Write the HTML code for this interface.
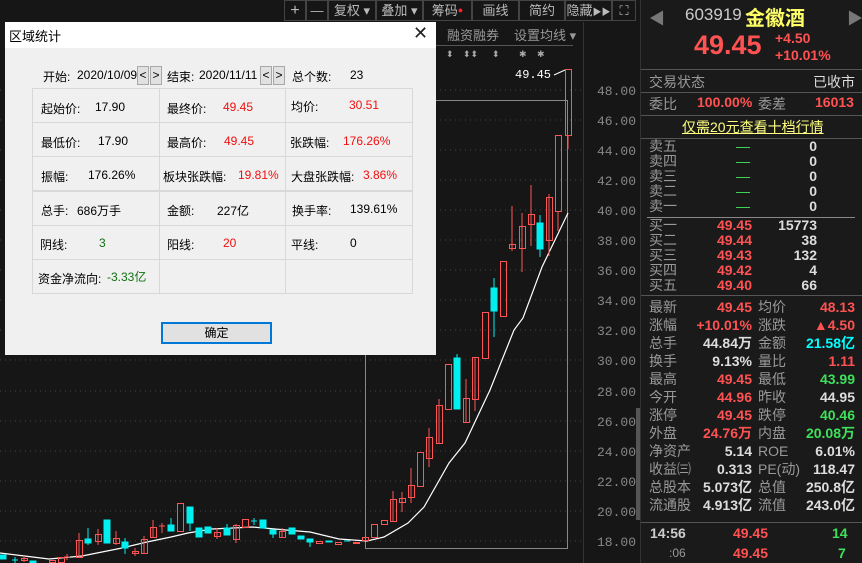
<!DOCTYPE html>
<html><head><meta charset="utf-8"><style>
*{margin:0;padding:0;box-sizing:border-box}
body{width:862px;height:563px;background:#161616;position:relative;overflow:hidden;font-family:"Liberation Sans","Noto Sans CJK SC",sans-serif;}
.a{position:absolute;white-space:nowrap}
.tb{position:absolute;top:0;height:21px;border:1px solid #444;color:#bbb;font-size:13px;text-align:center;line-height:19px}
.dlg{position:absolute;left:5px;top:22px;width:431px;height:333px;background:#f0f0f0;font-size:12px;color:#000}
.dt{position:absolute;left:0;top:0;width:431px;height:26px;background:#fff}
.cell{position:absolute;border:1px solid #d8d8d8;background:#f0f0f0}
.r{color:#f01010}.g{color:#107010}
.sb{position:absolute;top:44px;width:12px;height:19px;border:1px solid #a8a8a8;background:#e1e1e1;font-size:12px;line-height:16px;text-align:center}
.rp{position:absolute;left:640px;top:0;width:222px;height:563px;background:#1a1a1a;border-left:1px solid #333}
.rp .a{font-size:14px}
.lb{color:#999}
.rd{color:#ff5252;font-weight:bold}
.gr{color:#3ee05a;font-weight:bold}
.wh{color:#ddd;font-weight:bold}
.hl{position:absolute;left:0;width:222px;height:1px;background:#555}
.rt{text-align:right}
</style></head><body>
<svg class="a" style="left:0;top:0" width="640" height="563">
<g stroke="#444" stroke-dasharray="1,4">
<line x1="0" y1="90" x2="585" y2="90"/><line x1="0" y1="120" x2="585" y2="120"/><line x1="0" y1="150" x2="585" y2="150"/><line x1="0" y1="180" x2="585" y2="180"/><line x1="0" y1="210" x2="585" y2="210"/><line x1="0" y1="240" x2="585" y2="240"/><line x1="0" y1="270" x2="585" y2="270"/><line x1="0" y1="300" x2="585" y2="300"/><line x1="0" y1="330" x2="585" y2="330"/><line x1="0" y1="360" x2="585" y2="360"/><line x1="0" y1="391" x2="585" y2="391"/><line x1="0" y1="421" x2="585" y2="421"/><line x1="0" y1="451" x2="585" y2="451"/><line x1="0" y1="481" x2="585" y2="481"/><line x1="0" y1="511" x2="585" y2="511"/><line x1="0" y1="541" x2="585" y2="541"/>
</g>
<line x1="583.5" y1="22" x2="583.5" y2="563" stroke="#333"/>
<g fill="#888" font-family="Liberation Mono,monospace" font-size="13">
<text x="597" y="95">48.00</text><text x="597" y="125">46.00</text><text x="597" y="155">44.00</text><text x="597" y="185">42.00</text><text x="597" y="215">40.00</text><text x="597" y="245">38.00</text><text x="597" y="275">36.00</text><text x="597" y="305">34.00</text><text x="597" y="335">32.00</text><text x="597" y="365">30.00</text><text x="597" y="396">28.00</text><text x="597" y="426">26.00</text><text x="597" y="456">24.00</text><text x="597" y="486">22.00</text><text x="597" y="516">20.00</text><text x="597" y="546">18.00</text>
</g>
<rect x="365.5" y="100.5" width="202" height="448" fill="none" stroke="#888"/>
<line x1="436" y1="45.5" x2="573" y2="45.5" stroke="#555"/>
<text x="447" y="40" fill="#999" font-size="13">融资融券</text>
<text x="514" y="40" fill="#999" font-size="13">设置均线 ▾</text>
<g fill="#aaa" font-size="9"><text x="446" y="57">⬍</text><text x="463" y="57">⬍⬍</text><text x="492" y="57">⬍</text><text x="519" y="57">✱</text><text x="537" y="57">✱</text></g>
<text x="515" y="78" fill="#fff" font-family="Liberation Mono,monospace" font-size="12">49.45</text>
<path d="M554 75 L565 70" stroke="#fff"/>
<polyline fill="none" stroke="#fff" stroke-width="1.2" points="0,553 49,559 82,556 122,548 147,542 171,537 188,533 212,529 253,527 286,530 310,532 339,539 367,541 384,537 408,523 424,507 449,463 465,443 490,390 514,330 523,318 542,267 555,240 568,213"/>
<g stroke="#ff5555" fill="none">
<line x1="24" y1="556" x2="24" y2="562"/><rect x="21.5" y="558.5" width="6" height="2"/>
<rect x="49.5" y="560.5" width="6" height="2"/>
<rect x="58.5" y="557.5" width="6" height="5"/>
<line x1="67" y1="554" x2="67" y2="560"/><line x1="64" y1="557" x2="70" y2="557"/>
<line x1="79" y1="533" x2="79" y2="557"/><rect x="76.5" y="540.5" width="6" height="17"/>
<line x1="98" y1="529" x2="98" y2="545"/><rect x="95.5" y="534.5" width="6" height="7"/>
<line x1="116" y1="531" x2="116" y2="545"/><rect x="113.5" y="538.5" width="6" height="5"/>
<rect x="132.5" y="551.5" width="6" height="2"/><line x1="135" y1="548" x2="135" y2="556"/>
<line x1="144" y1="536" x2="144" y2="553"/><rect x="141.5" y="539.5" width="6" height="14"/>
<line x1="153" y1="520" x2="153" y2="537"/><rect x="150.5" y="527.5" width="6" height="10"/>
<line x1="162" y1="523" x2="162" y2="533"/><line x1="159" y1="526" x2="165" y2="526"/>
<rect x="177.5" y="503.5" width="6" height="28"/>
<line x1="217" y1="528" x2="217" y2="539"/><rect x="214.5" y="532.5" width="6" height="4"/>
<line x1="236" y1="524" x2="236" y2="543"/><rect x="233.5" y="525.5" width="6" height="14"/>
<rect x="242.5" y="519.5" width="6" height="8"/>
<line x1="282" y1="528" x2="282" y2="538"/><rect x="279.5" y="531.5" width="6" height="6"/>
<rect x="316.5" y="541.5" width="6" height="2"/>
<rect x="335.5" y="542.5" width="6" height="2"/>
<rect x="353.5" y="542.5" width="6" height="1"/>
<rect x="362.5" y="537.5" width="6" height="3"/>
<rect x="371.5" y="524.5" width="6" height="13"/>
<rect x="381.5" y="520.5" width="6" height="4"/>
<line x1="393" y1="491" x2="393" y2="521"/><rect x="390.5" y="499.5" width="6" height="22"/>
<line x1="402" y1="492" x2="402" y2="512"/><rect x="399.5" y="498.5" width="6" height="4"/>
<line x1="411" y1="468" x2="411" y2="503"/><rect x="408.5" y="485.5" width="6" height="12"/>
<rect x="417.5" y="452.5" width="6" height="34"/>
<line x1="429" y1="428" x2="429" y2="467"/><rect x="426.5" y="437.5" width="6" height="21"/>
<line x1="439" y1="399" x2="439" y2="443"/><rect x="436.5" y="405.5" width="6" height="38"/>
<rect x="445.5" y="364.5" width="6" height="45"/>
<line x1="466" y1="379" x2="466" y2="422"/><rect x="463.5" y="398.5" width="6" height="24"/>
<line x1="475" y1="357" x2="475" y2="411"/><rect x="472.5" y="357.5" width="6" height="42"/>
<rect x="482.5" y="312.5" width="6" height="46"/>
<rect x="500.5" y="261.5" width="6" height="55"/>
<line x1="512" y1="206" x2="512" y2="251"/><rect x="509.5" y="244.5" width="6" height="4"/>
<line x1="522" y1="213" x2="522" y2="272"/><rect x="519.5" y="226.5" width="6" height="22"/>
<line x1="531" y1="185" x2="531" y2="246"/><rect x="528.5" y="214.5" width="6" height="10"/>
<line x1="549" y1="194" x2="549" y2="256"/><rect x="546.5" y="197.5" width="6" height="43"/>
<line x1="558" y1="211" x2="558" y2="231"/><rect x="555.5" y="135.5" width="6" height="76"/>
<line x1="568" y1="135" x2="568" y2="149"/><rect x="565.5" y="69.5" width="6" height="66"/>
</g>
<g fill="#00f0f0" stroke="#00f0f0">
<rect x="0" y="555" width="6" height="4"/><line x1="12" y1="560" x2="18" y2="560"/><line x1="15" y1="557" x2="15" y2="563"/>
<rect x="30" y="561" width="6" height="2"/>
<line x1="88" y1="528" x2="88" y2="545"/><rect x="85" y="539" width="6" height="4"/>
<rect x="104" y="520" width="6" height="23"/>
<line x1="125" y1="538" x2="125" y2="554"/><rect x="122" y="542" width="6" height="6"/>
<line x1="171" y1="518" x2="171" y2="531"/><rect x="168" y="525" width="6" height="6"/>
<line x1="190" y1="507" x2="190" y2="531"/><rect x="187" y="507" width="6" height="16"/>
<rect x="196" y="528" width="6" height="9"/><rect x="205" y="527" width="6" height="6"/>
<line x1="227" y1="524" x2="227" y2="535"/><rect x="224" y="528" width="6" height="7"/>
<line x1="254" y1="518" x2="254" y2="525"/><line x1="251" y1="521" x2="257" y2="521"/>
<rect x="260" y="520" width="6" height="8"/>
<line x1="273" y1="530" x2="273" y2="538"/><rect x="270" y="530" width="6" height="4"/>
<rect x="289" y="528" width="6" height="6"/><rect x="298" y="536" width="6" height="3"/>
<line x1="310" y1="539" x2="310" y2="547"/><rect x="307" y="539" width="6" height="3"/>
<rect x="326" y="541" width="6" height="1"/><line x1="344" y1="541" x2="350" y2="541"/>
<line x1="457" y1="354" x2="457" y2="409"/><rect x="454" y="358" width="6" height="51"/>
<line x1="494" y1="278" x2="494" y2="337"/><rect x="491" y="288" width="6" height="23"/>
<line x1="540" y1="215" x2="540" y2="257"/><rect x="537" y="223" width="6" height="26"/>
</g>
</svg>
<!-- toolbar -->
<div class="tb" style="left:284px;width:22px;font-size:16px">+</div>
<div class="tb" style="left:306px;width:22px">—</div>
<div class="tb" style="left:328px;width:48px">复权 ▾</div>
<div class="tb" style="left:376px;width:47px">叠加 ▾</div>
<div class="tb" style="left:423px;width:49px">筹码<span style="color:#f22;font-size:9px;vertical-align:top">●</span></div>
<div class="tb" style="left:472px;width:47px">画线</div>
<div class="tb" style="left:519px;width:46px">简约</div>
<div class="tb" style="left:565px;width:47px">隐藏<span style="font-size:9px">▶▶</span></div>
<div class="tb" style="left:612px;width:24px">⛶</div>
<!-- dialog -->
<div class="dlg">
<div class="dt"><span class="a" style="left:4px;top:4px;font-size:13px">区域统计</span><span class="a" style="left:408px;top:1px;font-size:18px;color:#222">✕</span></div>
<span class="a" style="left:38px;top:46px">开始:</span><span class="a" style="left:72px;top:46px">2020/10/09</span>
<div class="sb" style="left:132px">&lt;</div><div class="sb" style="left:145px">&gt;</div>
<span class="a" style="left:162px;top:46px">结束:</span><span class="a" style="left:194px;top:46px">2020/11/11</span>
<div class="sb" style="left:255px">&lt;</div><div class="sb" style="left:268px">&gt;</div>
<span class="a" style="left:287px;top:46px">总个数:</span><span class="a" style="left:345px;top:46px">23</span>
<div class="cell" style="left:27px;top:66px;width:128px;height:35px"></div><div class="cell" style="left:154px;top:66px;width:127px;height:35px"></div><div class="cell" style="left:280px;top:66px;width:128px;height:35px"></div>
<div class="cell" style="left:27px;top:100px;width:128px;height:35px"></div><div class="cell" style="left:154px;top:100px;width:127px;height:35px"></div><div class="cell" style="left:280px;top:100px;width:128px;height:35px"></div>
<div class="cell" style="left:27px;top:134px;width:128px;height:35px"></div><div class="cell" style="left:154px;top:134px;width:127px;height:35px"></div><div class="cell" style="left:280px;top:134px;width:128px;height:35px"></div>
<div class="cell" style="left:27px;top:169px;width:128px;height:35px"></div><div class="cell" style="left:154px;top:169px;width:127px;height:35px"></div><div class="cell" style="left:280px;top:169px;width:128px;height:35px"></div>
<div class="cell" style="left:27px;top:203px;width:128px;height:35px"></div><div class="cell" style="left:154px;top:203px;width:127px;height:35px"></div><div class="cell" style="left:280px;top:203px;width:128px;height:35px"></div>
<div class="cell" style="left:27px;top:237px;width:128px;height:35px"></div><div class="cell" style="left:154px;top:237px;width:127px;height:35px"></div><div class="cell" style="left:280px;top:237px;width:128px;height:35px"></div>
<span class="a" style="left:36px;top:78px">起始价:</span><span class="a" style="left:90px;top:78px">17.90</span>
<span class="a" style="left:162px;top:78px">最终价:</span><span class="a r" style="left:218px;top:78px">49.45</span>
<span class="a" style="left:286px;top:76px">均价:</span><span class="a r" style="left:344px;top:76px">30.51</span>
<span class="a" style="left:36px;top:112px">最低价:</span><span class="a" style="left:93px;top:112px">17.90</span>
<span class="a" style="left:162px;top:112px">最高价:</span><span class="a r" style="left:219px;top:112px">49.45</span>
<span class="a" style="left:285px;top:112px">张跌幅:</span><span class="a r" style="left:338px;top:112px">176.26%</span>
<span class="a" style="left:36px;top:146px">振幅:</span><span class="a" style="left:83px;top:146px">176.26%</span>
<span class="a" style="left:158px;top:146px">板块张跌幅:</span><span class="a r" style="left:233px;top:146px">19.81%</span>
<span class="a" style="left:286px;top:146px">大盘张跌幅:</span><span class="a r" style="left:358px;top:146px">3.86%</span>
<span class="a" style="left:36px;top:180px">总手:</span><span class="a" style="left:72px;top:180px">686万手</span>
<span class="a" style="left:162px;top:180px">金额:</span><span class="a" style="left:212px;top:180px">227亿</span>
<span class="a" style="left:287px;top:180px">换手率:</span><span class="a" style="left:345px;top:180px">139.61%</span>
<span class="a" style="left:35px;top:214px">阴线:</span><span class="a g" style="left:94px;top:214px">3</span>
<span class="a" style="left:162px;top:214px">阳线:</span><span class="a r" style="left:218px;top:214px">20</span>
<span class="a" style="left:286px;top:214px">平线:</span><span class="a" style="left:345px;top:214px">0</span>
<span class="a" style="left:33px;top:248px">资金净流向:</span><span class="a g" style="left:102px;top:246px">-3.33亿</span>
<div class="a" style="left:156px;top:300px;width:111px;height:22px;border:2px solid #0078d7;background:#e1e1e1;text-align:center;line-height:18px">确定</div>
</div>
<div class="a" style="left:636px;top:408px;width:5px;height:112px;background:#555"></div>
<!-- right panel -->
<div class="rp">
<span class="a" style="left:8px;top:5px;color:#777;font-size:16px">◀</span>
<span class="a" style="left:44px;top:5px;color:#ccc;font-size:17px">603919</span>
<span class="a" style="left:104px;top:2px;color:#ffff66;font-size:20px;font-weight:bold">金徽酒</span>
<span class="a" style="left:206px;top:5px;color:#777;font-size:16px">▶</span>
<span class="a" style="left:53px;top:30px;color:#ff5252;font-size:27px;font-weight:bold">49.45</span>
<span class="a rd" style="left:134px;top:30px;font-size:14px">+4.50</span>
<span class="a rd" style="left:134px;top:47px;font-size:14px">+10.01%</span>
<div class="hl" style="top:69px"></div>
<span class="a lb" style="left:8px;top:72px">交易状态</span><span class="a" style="left:172px;top:72px;color:#ddd">已收市</span>
<div class="hl" style="top:92px"></div>
<span class="a lb" style="left:8px;top:94px">委比</span><span class="a rd" style="left:56px;top:94px">100.00%</span><span class="a lb" style="left:117px;top:94px">委差</span><span class="a rd" style="left:174px;top:94px">16013</span>
<div class="hl" style="top:115px"></div>
<span class="a" style="left:41px;top:117px;color:#ffff80;text-decoration:underline">仅需20元查看十档行情</span>
<div class="hl" style="top:138px"></div>
<div class="a lb" style="left:8px;top:139px;line-height:15px">卖五<br>卖四<br>卖三<br>卖二<br>卖一</div>
<div class="a" style="left:95px;top:139px;line-height:15px;color:#3ee05a">—<br>—<br>—<br>—<br>—</div>
<div class="a wh rt" style="left:140px;top:139px;width:36px;line-height:15px">0<br>0<br>0<br>0<br>0</div>
<div class="hl" style="top:217px;left:6px;width:208px;background:#888"></div>
<div class="a lb" style="left:8px;top:218px;line-height:15px">买一<br>买二<br>买三<br>买四<br>买五</div>
<div class="a rd rt" style="left:60px;top:218px;width:51px;line-height:15px">49.45<br>49.44<br>49.43<br>49.42<br>49.40</div>
<div class="a wh rt" style="left:120px;top:218px;width:56px;line-height:15px">15773<br>38<br>132<br>4<br>66</div>
<div class="hl" style="top:295px"></div>
<div class="a lb" style="left:8px;top:298px;line-height:18px">最新<br>涨幅<br>总手<br>换手<br>最高<br>今开<br>涨停<br>外盘<br>净资产<br>收益㈢<br>总股本<br>流通股</div>
<div class="a rt" style="left:20px;top:298px;width:91px;line-height:18px;font-weight:bold"><span style="color:#ff5252">49.45</span><br><span style="color:#ff5252">+10.01%</span><br><span style="color:#ddd">44.84万</span><br><span style="color:#ddd">9.13%</span><br><span style="color:#ff5252">49.45</span><br><span style="color:#ff5252">44.96</span><br><span style="color:#ff5252">49.45</span><br><span style="color:#ff5252">24.76万</span><br><span style="color:#ddd">5.14</span><br><span style="color:#ddd">0.313</span><br><span style="color:#ddd">5.073亿</span><br><span style="color:#ddd">4.913亿</span></div>
<div class="a lb" style="left:117px;top:298px;line-height:18px">均价<br>涨跌<br>金额<br>量比<br>最低<br>昨收<br>跌停<br>内盘<br>ROE<br>PE(动)<br>总值<br>流值</div>
<div class="a rt" style="left:120px;top:298px;width:94px;line-height:18px;font-weight:bold"><span style="color:#ff5252">48.13</span><br><span style="color:#ff5252">▲4.50</span><br><span style="color:#00ffff">21.58亿</span><br><span style="color:#ff5252">1.11</span><br><span style="color:#3ee05a">43.99</span><br><span style="color:#ddd">44.95</span><br><span style="color:#3ee05a">40.46</span><br><span style="color:#3ee05a">20.08万</span><br><span style="color:#ddd">6.01%</span><br><span style="color:#ddd">118.47</span><br><span style="color:#ddd">250.8亿</span><br><span style="color:#ddd">243.0亿</span></div>
<div class="hl" style="top:522px"></div>
<span class="a" style="left:9px;top:525px;color:#ccc;font-weight:bold">14:56</span>
<span class="a rd" style="left:92px;top:525px">49.45</span>
<span class="a gr" style="left:191px;top:525px">14</span>
<span class="a" style="left:28px;top:546px;color:#999;font-size:12px">:06</span>
<span class="a rd" style="left:92px;top:545px">49.45</span>
<span class="a gr" style="left:197px;top:545px">7</span>
</div>
</body></html>
